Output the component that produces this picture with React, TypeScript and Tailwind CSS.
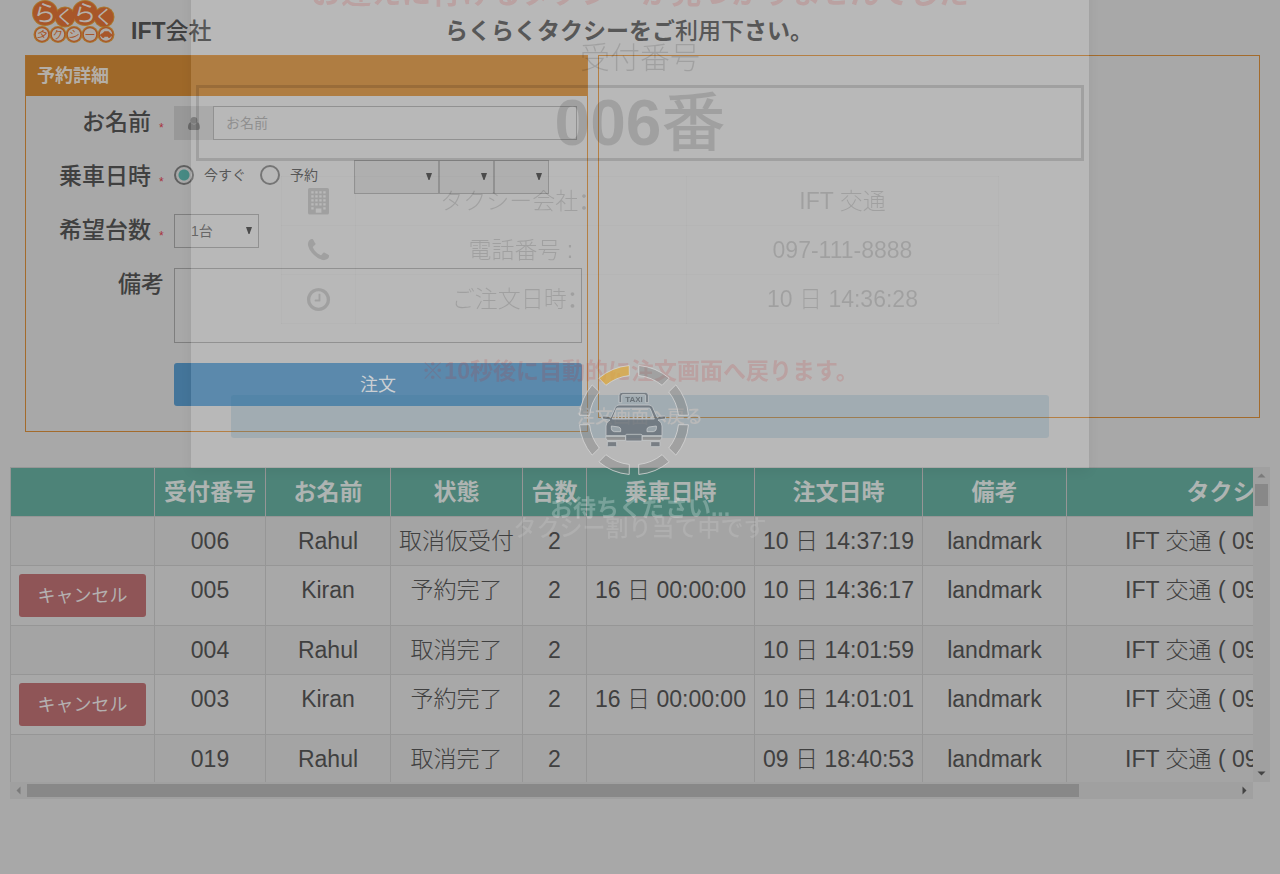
import React from 'react';

type Booking = {
  id: string;
  name: string;
  status: string;
  count: string;
  rideAt: string;
  orderedAt: string;
  note: string;
  company: string;
  cancellable?: boolean;
};

const COMPANY = 'IFT 交通 ( 097-111-8888 )';

const bookings: Booking[] = [
  { id: '006', name: 'Rahul', status: '取消仮受付', count: '2', rideAt: '', orderedAt: '10 日 14:37:19', note: 'landmark', company: COMPANY },
  { id: '005', name: 'Kiran', status: '予約完了', count: '2', rideAt: '16 日 00:00:00', orderedAt: '10 日 14:36:17', note: 'landmark', company: COMPANY, cancellable: true },
  { id: '004', name: 'Rahul', status: '取消完了', count: '2', rideAt: '', orderedAt: '10 日 14:01:59', note: 'landmark', company: COMPANY },
  { id: '003', name: 'Kiran', status: '予約完了', count: '2', rideAt: '16 日 00:00:00', orderedAt: '10 日 14:01:01', note: 'landmark', company: COMPANY, cancellable: true },
  { id: '019', name: 'Rahul', status: '取消完了', count: '2', rideAt: '', orderedAt: '09 日 18:40:53', note: 'landmark', company: COMPANY },
];

const headings = ['', '受付番号', 'お名前', '状態', '台数', '乗車日時', '注文日時', '備考', 'タクシー会社'];

function Logo() {
  const top = [
    { x: 13, y: 13, r: 12, s: 23, t: 'ら', a: 8 },
    { x: 33, y: 17, r: 9.5, s: 19, t: 'く', a: 0 },
    { x: 53, y: 13, r: 12, s: 23, t: 'ら', a: 8 },
    { x: 72, y: 17, r: 9.5, s: 19, t: 'く', a: 0 },
  ];
  const bottom = [
    { x: 10, t: 'タ', a: 20 },
    { x: 26, t: 'ク', a: -10 },
    { x: 42, t: 'シ', a: 15 },
    { x: 58, t: 'ー', a: 0 },
    { x: 74, t: '', a: 0 },
  ];
  return (
    <svg viewBox="0 0 84 44" className="h-[44px] w-[84px] shrink-0" role="img" aria-label="らくらくタクシー">
      {top.map((c, i) => (
        <circle key={i} cx={c.x} cy={c.y} r={c.r + 1} fill="#ab762e" />
      ))}
      {bottom.map((c, i) => (
        <circle key={i} cx={c.x} cy="34.5" r="8.5" fill="#ab762e" />
      ))}
      {top.map((c, i) => (
        <circle key={i} cx={c.x} cy={c.y} r={c.r} fill="#a85629" />
      ))}
      {bottom.map((c, i) => (
        <circle key={i} cx={c.x} cy="34.5" r="6.8" fill="#adaaa6" stroke="#a85629" strokeWidth="1.2" />
      ))}
      {top.map((c, i) => (
        <text key={i} x={c.x} y={c.y + c.s * 0.37} fontSize={c.s} fontWeight="400" fill="#b5b0ab" textAnchor="middle" transform={`rotate(${c.a} ${c.x} ${c.y})`}>
          {c.t}
        </text>
      ))}
      {bottom.map((c, i) => (
        <text key={i} x={c.x} y="38.5" fontSize="11" fontWeight="400" fill="#a85629" textAnchor="middle" transform={`rotate(${c.a} ${c.x} 34.5)`}>
          {c.t}
        </text>
      ))}
      <path d="M68 35.5q0-2 2.5-2.2l2-2h4l2 2q1.8.2 1.8 2.2l-1 1.2h-10z" fill="#a85629" />
      <circle cx="71.2" cy="36.8" r="1.3" fill="#a85629" />
      <circle cx="77.2" cy="36.8" r="1.3" fill="#a85629" />
    </svg>
  );
}

function UserIcon() {
  return (
    <svg viewBox="0 0 12 13" className="h-[13px] w-[12px]" fill="#696969" aria-hidden="true">
      <circle cx="6" cy="3.4" r="3.4" />
      <path d="M2.8 5.2Q0 6 0 10.3 0 13 2.3 13h7.400Q12 13 12 10.3 12 6 9.200 5.200 8 7.400 6 7.400T2.800 5.200z" />
    </svg>
  );
}

function BuildingIcon() {
  const cols = [4, 8, 12, 16];
  const rows = [4, 8, 12, 16];
  return (
    <svg viewBox="0 0 21 27" className="mx-auto h-[27px] w-[21px]" aria-hidden="true">
      <rect width="21" height="26.5" rx="1.5" fill="#000" fillOpacity="0.13" />
      {rows.map((y) =>
        cols.map((x) => <rect key={`${x}-${y}`} x={x - 0.7} y={y - 0.8} width="2.3" height="2.3" fill="#b9b9b9" />)
      )}
      <rect x="3.3" y="19.2" width="2.3" height="2.3" fill="#b9b9b9" />
      <rect x="15.3" y="19.2" width="2.3" height="2.3" fill="#b9b9b9" />
      <rect x="7.8" y="20.5" width="5.6" height="4.2" fill="#b9b9b9" />
    </svg>
  );
}

function PhoneIcon() {
  return (
    <svg viewBox="0 0 1792 1792" className="mx-auto size-[27px]" fill="#000" fillOpacity="0.13" aria-hidden="true">
      <path d="M1600 1240q0 27-10 70.500t-21 68.500q-21 50-122 106-94 51-186 51-27 0-52.500-3.500t-57.500-12.500-47.500-14.500-55.500-20.500-49-18q-98-35-175-83-128-79-264.500-215.500t-215.500-264.500q-48-77-83-175-3-9-18-49t-20.500-55.500-14.500-47.500-12.500-57.500-3.500-52.500q0-92 51-186 56-101 106-122 25-11 68.500-21t70.500-10q14 0 21 3 18 6 53 76 11 19 30 54t35 63.500 31 53.500q3 4 17.500 25t21.500 35.500 7 28.500q0 20-28.500 50t-62 55-62 53-28.500 46q0 9 5 22.500t8.500 20.500 14 24 11.500 19q76 137 174 235t235 174q2 1 19 11.500t24 14 20.500 8.500 22.500 5q18 0 46-28.500t53-62 55-62 50-28.500q14 0 28.500 7t35.500 21.500 25 17.500q25 15 53.500 31t63.500 35 54 30q70 35 76 53 3 7 3 21z" />
    </svg>
  );
}

function ClockIcon() {
  return (
    <svg viewBox="0 0 1792 1792" className="mx-auto size-[27px]" fill="#000" fillOpacity="0.13" aria-hidden="true">
      <path d="M1024 544v448q0 14-9 23t-23 9h-320q-14 0-23-9t-9-23v-64q0-14 9-23t23-9h224v-352q0-14 9-23t23-9h64q14 0 23 9t9 23zm416 352q0-148-73-273t-198-198-273-73-273 73-198 198-73 273 73 273 198 198 273 73 273-73 198-198 73-273zm224 0q0 209-103 385.500t-279.500 279.500-385.500 103-385.500-103-279.500-279.500-103-385.500 103-385.500 279.500-279.500 385.500-103 385.500 103 279.500 279.500 103 385.500z" />
    </svg>
  );
}

function Caret({ dir, tone }: { dir: 'up' | 'down' | 'left' | 'right'; tone: string }) {
  const d = {
    up: 'M4.5 2.5L8.5 6.5H0.5z',
    down: 'M0.5 2.5H8.5L4.5 6.5z',
    left: 'M2.5 4.5L6.5 0.5V8.5z',
    right: 'M6.5 4.5L2.5 0.5V8.5z',
  }[dir];
  return (
    <svg viewBox="0 0 9 9" className="size-[9px]" fill={tone} aria-hidden="true">
      <path d={d} />
    </svg>
  );
}

function Select({ label, id, width, options, disabled }: { label: string; id: string; width: string; options: string[]; disabled?: boolean }) {
  return (
    <div className={`relative ${width}`}>
      <select
        id={id}
        aria-label={label}
        disabled={disabled}
        className={`block h-[34px] w-full appearance-none border border-[#7e7e7e] pl-4 text-sm text-[#505050] opacity-100 ${disabled ? 'bg-[#9e9e9e]' : 'bg-[#a8a8a8]'}`}
      >
        {options.map((o) => (
          <option key={o}>{o}</option>
        ))}
      </select>
      <svg viewBox="0 0 6 7" className="pointer-events-none absolute top-[13px] right-[7px] h-[7px] w-[6px]" fill="#333" aria-hidden="true">
        <path d="M0 0H6L3.5 7H2.5z" />
      </svg>
    </div>
  );
}

function Row({ label, htmlFor, required, children }: { label: string; htmlFor: string; required?: boolean; children: React.ReactNode }) {
  return (
    <div className="flex items-start">
      <label htmlFor={htmlFor} className="flex w-[138px] shrink-0 justify-end gap-2 text-[23px] leading-8 font-medium whitespace-nowrap text-[#404040]">
        {label}
        {required && <span className="w-[5px] self-end text-xs leading-5 text-[#a8323c]">*</span>}
      </label>
      <div className="ml-[10px] min-w-0 flex-1">{children}</div>
    </div>
  );
}

const radioClass =
  'size-5 appearance-none rounded-full border-2 border-[#606060] checked:bg-[radial-gradient(circle,#468a84_5px,transparent_6px)]';

function BookingForm() {
  return (
    <section className="border border-[#a36b2c]">
      <h2 className="bg-[#9e6829] px-[11px] text-lg leading-10 font-bold text-[#b4aea6]">予約詳細</h2>
      <form className="flex flex-col gap-5 pt-[10px] pr-[5px] pb-[25px]">
        <Row label="お名前" htmlFor="name" required>
          <div className="mr-[5px] flex h-[34px]">
            <span className="flex w-[39px] items-center justify-center bg-[#989898]">
              <UserIcon />
            </span>
            <input id="name" placeholder="お名前" className="min-w-0 flex-1 border border-[#7e7e7e] px-3 text-sm placeholder:text-[#7c7c7c]" />
          </div>
        </Row>
        <Row label="乗車日時" htmlFor="now" required>
          <div className="flex h-[34px] items-start text-sm text-[#404040]">
            <div className="flex h-[30px] items-center">
              <input id="now" type="radio" name="when" defaultChecked className={radioClass} />
              <label htmlFor="now" className="ml-[10px] w-[56px]">今すぐ</label>
              <input id="later" type="radio" name="when" className={radioClass} />
              <label htmlFor="later" className="ml-[10px] w-[64px]">予約</label>
            </div>
            <Select id="day" label="日" width="w-[85px]" options={['']} disabled />
            <Select id="hour" label="時" width="w-[55px]" options={['']} disabled />
            <Select id="minute" label="分" width="w-[55px]" options={['']} disabled />
          </div>
        </Row>
        <Row label="希望台数" htmlFor="count" required>
          <Select id="count" label="希望台数" width="w-[85px]" options={['1台', '2台', '3台']} />
        </Row>
        <Row label="備考" htmlFor="note">
          <textarea id="note" className="block h-[75px] w-full resize-none border border-[#7e7e7e] p-2 text-sm" />
        </Row>
        <button type="button" className="ml-[148px] h-[43px] rounded-[3px] bg-[#44759a] text-lg text-[#bcc0c4]">
          注文
        </button>
      </form>
    </section>
  );
}

function BookingTable() {
  return (
    <section className="mx-[10px] mt-[35px]">
      <div className="flex h-[315px]">
        <div className="min-w-0 flex-1 overflow-hidden">
          <table className="w-[1434px] table-fixed border-collapse text-center text-[23px] leading-8 whitespace-nowrap text-[#404040]">
            <colgroup>
              <col className="w-[144px]" />
              <col className="w-[111px]" />
              <col className="w-[125px]" />
              <col className="w-[132px]" />
              <col className="w-[64px]" />
              <col className="w-[168px]" />
              <col className="w-[168px]" />
              <col className="w-[144px]" />
              <col className="w-[378px]" />
            </colgroup>
            <thead>
              <tr className="bg-[#4d8378] text-[#aeb4b2]">
                {headings.map((h, i) => (
                  <th key={i} className="border border-[#969696] py-2 font-bold">
                    {h}
                  </th>
                ))}
              </tr>
            </thead>
            <tbody>
              {bookings.map((b) => (
                <tr key={b.id} className="align-top odd:bg-[#a4a4a4]">
                  <td className="border border-[#969696] p-2">
                    {b.cancellable && (
                      <button type="button" className="block h-[43px] w-full rounded-[3px] bg-[#8f5557] text-lg text-[#b4b0b0]">
                        キャンセル
                      </button>
                    )}
                  </td>
                  <td className="border border-[#969696] py-2">{b.id}</td>
                  <td className="border border-[#969696] py-2">{b.name}</td>
                  <td className="border border-[#969696] py-2 font-light">{b.status}</td>
                  <td className="border border-[#969696] py-2">{b.count}</td>
                  <td className="border border-[#969696] py-2 font-light">{b.rideAt}</td>
                  <td className="border border-[#969696] py-2 font-light">{b.orderedAt}</td>
                  <td className="border border-[#969696] py-2">{b.note}</td>
                  <td className="border border-[#969696] py-2 font-light">{b.company}</td>
                </tr>
              ))}
            </tbody>
          </table>
        </div>
        <div className="flex w-[17px] flex-col items-center bg-[#a0a0a0] py-1">
          <Caret dir="up" tone="#7b7b7b" />
          <div className="mt-1 h-[22px] w-[13px] bg-[#888]" />
          <div className="flex-1" />
          <Caret dir="down" tone="#444" />
        </div>
      </div>
      <div className="mr-[17px] flex h-[17px] items-center bg-[#a0a0a0] px-1">
        <Caret dir="left" tone="#7b7b7b" />
        <div className="mx-1 flex-1">
          <div className="h-[13px] w-[87%] bg-[#888]" />
        </div>
        <Caret dir="right" tone="#444" />
      </div>
    </section>
  );
}

function WideColon() {
  return <span className="font-['Noto_Sans_CJK_SC',sans-serif] leading-none font-medium">：</span>;
}

function ResultDialog() {
  const details = [
    { icon: <BuildingIcon />, label: <>タクシー会社<WideColon /></>, value: 'IFT 交通' },
    { icon: <PhoneIcon />, label: '電話番号 :', value: '097-111-8888' },
    { icon: <ClockIcon />, label: <>ご注文日時<WideColon /></>, value: '10 日 14:36:28' },
  ];
  return (
    <div role="dialog" aria-label="受付番号" className="absolute -top-[30px] left-1/2 w-[898px] max-w-full -translate-x-1/2 bg-white/11 pb-[30px] text-center text-black/13 shadow-[0_3px_12px_rgba(0,0,0,0.06)] backdrop-brightness-105">
      <h1 className="text-3xl leading-[46px] font-bold whitespace-nowrap text-[rgba(190,40,40,0.16)]">お迎えに行けるタクシーが見つかりませんでした</h1>
      <p className="mt-[15px] text-3xl leading-[54px] font-light">受付番号</p>
      <p className="mx-[5px] border-[3px] border-black/13 text-[64px] leading-[70px] font-bold">
        006<span className="font-medium">番</span>
      </p>
      <table className="mx-auto mt-[15px] w-4/5 table-fixed border-collapse text-[23px] leading-8">
        <tbody>
          {details.map((d) => (
            <tr key={d.value}>
              <td className="w-[74px] border border-black/2 py-2">{d.icon}</td>
              <td className="w-[331px] border border-black/2 py-2 font-light">{d.label}</td>
              <td className="border border-black/2 py-2 font-light">{d.value}</td>
            </tr>
          ))}
        </tbody>
      </table>
      <p className="mt-6 text-[23px] leading-[47px] font-bold text-[rgba(190,40,40,0.16)]">※10秒後に自動的に注文画面へ戻ります。</p>
      <div className="flex px-10">
        <button type="button" className="h-[43px] flex-1 rounded-[3px] bg-[rgba(50,115,150,0.17)] text-lg font-medium text-[#b9b9b9]">
          注文画面へ戻る
        </button>
      </div>
    </div>
  );
}

function segmentPath(index: number) {
  const cx = 282;
  const cy = 210;
  const outer = 164;
  const inner = 134;
  const pt = (r: number, deg: number) => {
    const a = (deg * Math.PI) / 180;
    return `${(cx + r * Math.sin(a)).toFixed(1)} ${(cy - r * Math.cos(a)).toFixed(1)}`;
  };
  const s = index * 45;
  return `M${pt(outer, s + 5)}A${outer} ${outer} 0 0 1 ${pt(outer, s + 40)}L${pt(inner, s + 39)}A${inner} ${inner} 0 0 0 ${pt(inner, s + 6)}z`;
}

function Loader() {
  return (
    <div role="status" className="pointer-events-none absolute inset-x-0 top-[363px] flex flex-col items-center text-[23px] leading-5">
      <svg viewBox="114 39 372 342" className="h-[114px] w-[124px]" aria-hidden="true">
        {[0, 1, 2, 3, 4, 5, 6, 7].map((i) => (
          <path key={i} d={segmentPath(i)} fill={i === 7 ? '#dba944' : '#808080'} fillOpacity={i === 7 ? 0.8 : 0.42} stroke="#d4d4d4" strokeOpacity="0.85" strokeWidth="3" />
        ))}
        <g fill="#5f6870" fillOpacity="0.72" stroke="#c4c8ca" strokeWidth="2.5" strokeLinejoin="round">
          <path fillRule="evenodd" d="M237 158V136q0-9 9-9h70q9 0 9 9v22h-8v-21q0-3-3-3h-66q-3 0-3 3v21z" />
          <path fillRule="evenodd" d="M198 257V228q0-10 9-16l3-2-22-3q-4-7 3-9l15 1 6 4 14-31q3-7 11-7h90q8 0 11 7l14 31 6-4 15-1q7 2 3 9l-22 3 3 2q9 6 9 16v29zM232 174q-2 0-3 3l-12 30h126l-12-30q-1-3-3-3z" />
          <path d="M197 259h60v12h-55q-5-3-5-12zM306 259h60q0 9-5 12h-55z" fill="#858585" />
          <rect x="257" y="253" width="49" height="20" rx="3" />
          <path d="M202 275h28v12q0 3-3 3h-22q-3 0-3-3zM332 275h28v12q0 3-3 3h-22q-3 0-3-3z" />
        </g>
        <g fill="#99a3a9" stroke="#c4c8ca" strokeWidth="2.5">
          <path d="M214 228l22 3q6 2 6 7v7h-19q-9-2-9-9zM349 228l-22 3q-6 2-6 7v7h19q9-2 9-9z" />
        </g>
        <text x="282" y="155" fontSize="24" fontWeight="700" fill="#6a7278" textAnchor="middle">
          TAXI
        </text>
      </svg>
      <p className="mt-[21px] font-bold text-white/25">お待ちください...</p>
      <p className="font-medium text-white/12">タクシー割り当て中です</p>
    </div>
  );
}

export default function App() {
  return (
    <div className="relative min-h-screen overflow-hidden bg-[#a8a8a8] font-['Liberation_Sans','Noto_Sans_CJK_JP',sans-serif] text-[#404040]">
      <header className="grid h-[55px] grid-cols-[413fr_835fr] pl-8 text-[23px] leading-8 font-bold">
        <div className="flex items-start gap-[15px]">
          <Logo />
          <p className="mt-[15px]">
            IFT<span className="font-medium">会社</span>
          </p>
        </div>
        <p className="mt-[15px] whitespace-nowrap">
          らくらくタクシーをご<span className="font-medium">利用下</span>さい。
        </p>
      </header>
      <main>
        <div className="grid grid-cols-[563fr_662fr] items-start gap-[10px] pr-5 pl-[25px]">
          <BookingForm />
          <section aria-label="地図" className="h-[363px] border border-[#a36b2c]" />
        </div>
        <BookingTable />
      </main>
      <ResultDialog />
      <Loader />
    </div>
  );
}
